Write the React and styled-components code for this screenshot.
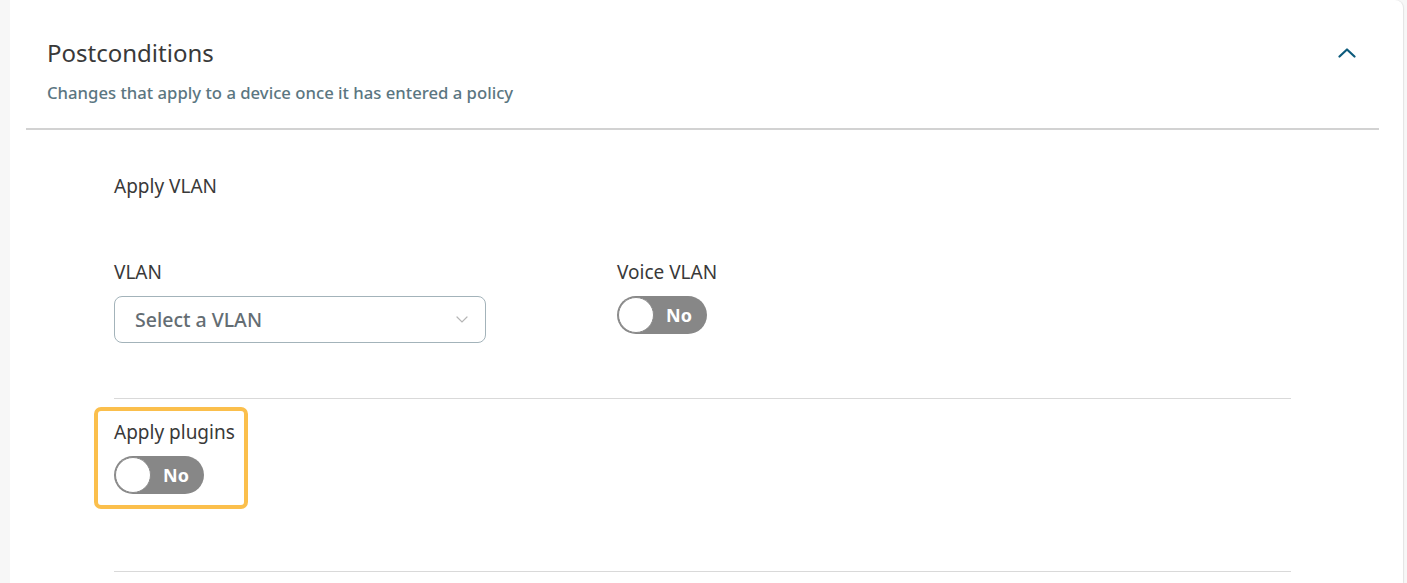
import React, { useState } from 'react';
import styled, { createGlobalStyle } from 'styled-components';

const GlobalStyle = createGlobalStyle`
  html, body {
    margin: 0;
    padding: 0;
    background: #f7f7f7;
    font-family: "Noto Sans", "Open Sans", sans-serif;
    color: #393939;
  }
`;

const Page = styled.div`
  padding-left: 10px;
  padding-right: 4px;
  height: 583px;
  overflow: hidden;
`;

const Card = styled.section`
  background: #fff;
  height: 100%;
  border-top-right-radius: 8px;
  box-shadow: 1px 0 1px rgba(0, 0, 0, 0.08);
`;

const Header = styled.header`
  display: flex;
  justify-content: space-between;
  align-items: flex-start;
  padding: 37px 20px 23px 21px;
  margin: 0 24px 0 16px;
  border-bottom: 2px solid #d2d2d2;
`;

const Title = styled.h2`
  margin: 0;
  font-size: 24px;
  font-weight: 400;
  line-height: 32px;
  color: #393939;
`;

const Subtitle = styled.p`
  margin: 12px 0 0;
  font-size: 16.7px;
  font-weight: 500;
  line-height: 24px;
  color: #5b7681;
`;

const CollapseButton = styled.button`
  border: 0;
  background: none;
  padding: 0;
  margin-top: 7px;
  width: 24px;
  height: 18px;
  display: flex;
  align-items: center;
  justify-content: center;
  cursor: pointer;
`;

const Body = styled.div`
  padding: 43px 0 0 104px;
  width: 1177px;
`;

const SectionLabel = styled.div`
  font-size: 19px;
  line-height: 26px;
  color: #393939;
`;

const FieldRow = styled.div`
  display: flex;
  gap: 131px;
  margin-top: 60px;
  padding-bottom: 55px;
  border-bottom: 1px solid #d9d9d9;
`;

const Field = styled.div`
  display: flex;
  flex-direction: column;
  gap: 11px;
`;

const Label = styled.label`
  font-size: 19px;
  line-height: 26px;
  color: #393939;
`;

const Select = styled.div`
  width: 372px;
  height: 47px;
  box-sizing: border-box;
  border: 1px solid #a3b3ba;
  border-radius: 8px;
  display: flex;
  align-items: center;
  justify-content: space-between;
  padding: 0 17px 0 20px;
  font-size: 19.5px;
  font-weight: 500;
  color: #646d73;
  cursor: pointer;
`;

const Toggle = styled.button`
  width: 90px;
  height: 38px;
  border-radius: 19px;
  border: 0;
  background: #878787;
  display: flex;
  align-items: center;
  padding: 0 1px;
  gap: 12px;
  cursor: pointer;
  font-family: inherit;
`;

const Knob = styled.span`
  width: 36px;
  height: 36px;
  border-radius: 50%;
  background: #fff;
  box-sizing: border-box;
  border: 1px solid #8a8a8a;
  flex: none;
`;

const ToggleText = styled.span`
  color: #fff;
  font-size: 18px;
  font-weight: 700;
`;

const PluginsRow = styled.div`
  padding: 8px 0 62px;
  border-bottom: 1px solid #d9d9d9;
`;

const Highlight = styled.div`
  display: inline-flex;
  flex-direction: column;
  gap: 11px;
  margin-left: -20px;
  padding: 8px 9px 11px 16px;
  border: 4px solid #fbbf4c;
  border-radius: 7px;
`;

function Switch({ on, onChange }) {
  return (
    <Toggle type="button" onClick={() => onChange(!on)}>
      <Knob />
      <ToggleText>{on ? 'Yes' : 'No'}</ToggleText>
    </Toggle>
  );
}

export default function App() {
  const [voice, setVoice] = useState(false);
  const [plugins, setPlugins] = useState(false);

  return (
    <Page>
      <GlobalStyle />
      <Card>
        <Header>
          <div>
            <Title>Postconditions</Title>
            <Subtitle>Changes that apply to a device once it has entered a policy</Subtitle>
          </div>
          <CollapseButton aria-label="Collapse">
            <svg width="18" height="10" viewBox="0 0 18 10" fill="none">
              <path d="M1.5 8.5L9 1.5l7.5 7" stroke="#0d5b7c" strokeWidth="2.2" strokeLinecap="round" strokeLinejoin="round" />
            </svg>
          </CollapseButton>
        </Header>

        <Body>
          <SectionLabel>Apply VLAN</SectionLabel>
          <FieldRow>
            <Field>
              <Label>VLAN</Label>
              <Select>
                Select a VLAN
                <svg width="12" height="7" viewBox="0 0 12 7" fill="none">
                  <path d="M1 1l5 5 5-5" stroke="#b5b5b5" strokeWidth="1.2" strokeLinecap="round" />
                </svg>
              </Select>
            </Field>
            <Field>
              <Label>Voice VLAN</Label>
              <Switch on={voice} onChange={setVoice} />
            </Field>
          </FieldRow>

          <PluginsRow>
            <Highlight>
              <Label>Apply plugins</Label>
              <Switch on={plugins} onChange={setPlugins} />
            </Highlight>
          </PluginsRow>
        </Body>
      </Card>
    </Page>
  );
}
